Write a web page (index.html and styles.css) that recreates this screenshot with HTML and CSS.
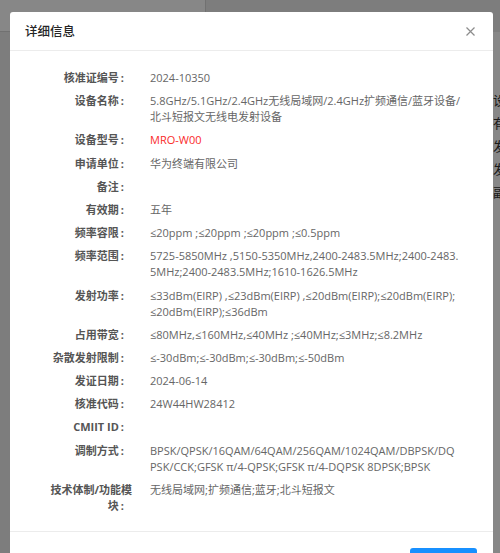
FILE: index.html
```html
<!DOCTYPE html>
<html lang="zh-CN">
<head>
<meta charset="utf-8">
<title>详细信息</title>
<link rel="stylesheet" href="styles.css">
</head>
<body>
<div class="page">
  <div class="topbar"></div>
  <div class="panel">
    <div class="panel-list">
      <div>设备名称</div>
      <div>有效期</div>
      <div>发射功率</div>
      <div>发证日期</div>
      <div>副本</div>
    </div>
  </div>
</div>

<div class="mask">
  <div class="modal">
    <div class="modal-header">
      <div class="modal-title">详细信息</div>
      <button class="modal-close" aria-label="关闭">
        <svg width="9" height="9" viewBox="0 0 9 9"><path d="M0.5 0.5L8.5 8.5M8.5 0.5L0.5 8.5" stroke="#8c8c8c" stroke-width="1.2" fill="none"/></svg>
      </button>
    </div>
    <div class="modal-body">
      <dl class="info">
        <dt>核准证编号</dt><dd>2024-10350</dd>
        <dt>设备名称</dt><dd>5.8GHz/5.1GHz/2.4GHz无线局域网/2.4GHz扩频通信/蓝牙设备/北斗短报文无线电发射设备</dd>
        <dt>设备型号</dt><dd class="red">MRO-W00</dd>
        <dt>申请单位</dt><dd>华为终端有限公司</dd>
        <dt>备注</dt><dd></dd>
        <dt>有效期</dt><dd>五年</dd>
        <dt>频率容限</dt><dd>≤20ppm ;≤20ppm ;≤20ppm ;≤0.5ppm</dd>
        <dt>频率范围</dt><dd>5725-5850MHz ,5150-5350MHz,2400-2483.5MHz;2400-2483.5MHz;2400-2483.5MHz;1610-1626.5MHz</dd>
        <dt>发射功率</dt><dd>≤&#8288;33dBm(EIRP) ,≤&#8288;23dBm(EIRP) ,≤&#8288;20dBm(EIRP);≤&#8288;20dBm(EIRP);≤&#8288;20dBm(EIRP);≤&#8288;36dBm</dd>
        <dt>占用带宽</dt><dd>≤80MHz,≤160MHz,≤40MHz ;≤40MHz;≤3MHz;≤8.2MHz</dd>
        <dt>杂散发射限制</dt><dd>≤-30dBm;≤-30dBm;≤-30dBm;≤-50dBm</dd>
        <dt>发证日期</dt><dd>2024-06-14</dd>
        <dt>核准代码</dt><dd>24W44HW28412</dd>
        <dt>CMIIT ID</dt><dd></dd>
        <dt>调制方式</dt><dd>BPSK/QPSK/16QAM/64QAM/256QAM/1024QAM/DBPSK/DQPSK/CCK;GFSK π/4-QPSK;GFSK π/4-DQPSK 8DPSK;BPSK</dd>
        <dt>技术体制/功能模块</dt><dd>无线局域网;扩频通信;蓝牙;北斗短报文</dd>
      </dl>
    </div>
    <div class="modal-footer">
      <button class="btn-primary">确 定</button>
    </div>
  </div>
</div>
</body>
</html>
```

FILE: styles.css
```css
* {
  box-sizing: border-box;
}

html, body {
  margin: 0;
  padding: 0;
  height: 100%;
  overflow: hidden;
}

body {
  background: #ececec;
  font-family: "Open Sans", "Noto Sans CJK SC", sans-serif;
  color: #333;
}

/* page behind the mask */
.page {
  display: flex;
  flex-direction: column;
  height: 100%;
}

.topbar {
  width: 206px;
  height: 32px;
  background: #fff;
  border-right: 1px solid #d6d6d6;
  border-bottom: 1px solid #d6d6d6;
}

.panel {
  flex: 1;
  margin-left: 300px;
  background: #fff;
}

.panel-list {
  padding: 56px 0 0 193px;
  font-family: "Noto Sans CJK SC", sans-serif;
  font-size: 13px;
  line-height: 23px;
  color: #333;
  white-space: nowrap;
}

/* mask + modal */
.mask {
  position: fixed;
  inset: 0;
  background: rgba(0, 0, 0, 0.47);
  overflow: hidden;
}

.modal {
  margin: 12px 0 0 10px;
  width: 483px;
  background: #fff;
  border-radius: 3px;
}

.modal-header {
  height: 39px;
  padding: 0 17px 0 15px;
  display: flex;
  align-items: center;
  justify-content: space-between;
  border-bottom: 1px solid #ececec;
}

.modal-title {
  font-family: "Noto Sans CJK SC", sans-serif;
  font-size: 12.5px;
  font-weight: 500;
  color: #262626;
  line-height: 38px;
}

.modal-close {
  border: 0;
  background: none;
  padding: 0;
  width: 9px;
  height: 9px;
  display: flex;
  margin-right: 1px;
}

.modal-body {
  padding: 19px 24px 17px 34px;
}

.info {
  margin: 0;
  display: grid;
  grid-template-columns: 88px 310.6px;
  column-gap: 18px;
  row-gap: 7.2px;
  font-size: 11px;
  line-height: 16px;
}

.info dt {
  text-align: right;
  font-weight: 700;
  color: #555;
}

.info dt::after {
  content: ":";
  margin: 0 8px 0 2px;
}

.info dd {
  margin: 0;
  min-height: 16px;
  color: #666;
  word-break: break-all;
}

.info dd.red {
  color: #fa2a2a;
}

.modal-footer {
  border-top: 1px solid #ececec;
  padding: 16px 16px 16px;
  display: flex;
  justify-content: flex-end;
}

.btn-primary {
  width: 67px;
  height: 24px;
  border: 0;
  border-radius: 3px;
  background: #1890ff;
  color: #fff;
  font-family: "Noto Sans CJK SC", sans-serif;
  font-size: 11px;
}
```
